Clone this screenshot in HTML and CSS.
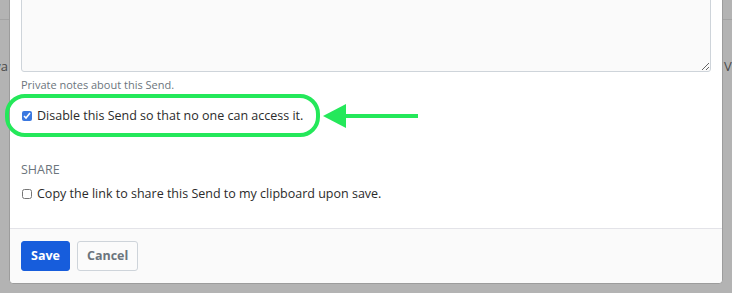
FILE: index.html
```html
<!DOCTYPE html>
<html lang="en">
<head>
<meta charset="utf-8">
<title>Edit Send</title>
<link rel="stylesheet" href="styles.css">
</head>
<body>
<div class="backdrop">
  <div class="edge edge-left">
    <div class="edge-rule"></div>
    <div class="edge-text">Java</div>
  </div>
  <div class="modal">
    <div class="modal-body">
      <textarea class="notes" aria-label="Notes"></textarea>
      <div class="help">Private notes about this Send.</div>
      <div class="callout">
        <label class="check-row">
          <input type="checkbox" class="check" checked>
          <span>Disable this Send so that no one can access it.</span>
        </label>
        <div class="ring"></div>
        <svg class="arrow" width="100" height="28" viewBox="0 0 100 28" aria-hidden="true">
          <polygon points="2,14 25,2 25,26" fill="#24e85a"/>
          <rect x="24" y="12" width="73" height="4" fill="#24e85a"/>
        </svg>
      </div>
      <div class="section-title">Share</div>
      <label class="check-row check-row-share">
        <input type="checkbox" class="check">
        <span>Copy the link to share this Send to my clipboard upon save.</span>
      </label>
    </div>
    <div class="modal-footer">
      <button class="btn btn-primary" type="button">Save</button>
      <button class="btn btn-outline" type="button">Cancel</button>
    </div>
  </div>
  <div class="edge edge-right">
    <div class="edge-rule"></div>
    <div class="edge-text">Vers</div>
  </div>
</div>
</body>
</html>
```

FILE: styles.css
```css
html, body {
  margin: 0;
  padding: 0;
  background: #b3b3b3;
  height: 293px;
  overflow: hidden;
}

body {
  font-family: "Open Sans", "Liberation Sans", sans-serif;
  color: #333333;
}

.backdrop {
  display: flex;
  align-items: flex-start;
  width: 732px;
}

.edge {
  width: 9px;
  flex: none;
  overflow: hidden;
}

.edge-rule {
  height: 19px;
  border-bottom: 1px solid #a3a3a3;
}

.edge-text {
  display: flex;
  margin-top: 37px;
  font-size: 13px;
  line-height: 18px;
  color: #4a4a4a;
  white-space: nowrap;
}

.edge-left .edge-text {
  justify-content: flex-end;
  padding-right: 1px;
}

.edge-right .edge-text {
  padding-left: 1px;
}

.modal {
  width: 714px;
  flex: none;
  box-sizing: border-box;
  margin-top: -40px;
  background: #ffffff;
  border: 1px solid #9c9c9c;
  border-radius: 4px;
}

.modal-body {
  padding: 0 11px 24px;
}

.notes {
  display: block;
  width: 100%;
  height: 111px;
  box-sizing: border-box;
  margin: 0;
  background: #fafafa;
  border: 1px solid #ced4da;
  border-radius: 3px;
  font-family: inherit;
}

.help {
  margin-top: 5px;
  font-size: 11px;
  line-height: 16px;
  color: #6c757d;
}

.callout {
  position: relative;
  margin-top: 13px;
}

.check-row {
  display: flex;
  align-items: center;
  gap: 5px;
  font-size: 12.5px;
  line-height: 20px;
  color: #2b2b2b;
}

.check {
  width: 10px;
  height: 10px;
  margin: 0 0 0 1px;
  accent-color: #3a78e0;
}

.ring {
  position: absolute;
  left: -16px;
  top: -12px;
  width: 315px;
  height: 43px;
  box-sizing: border-box;
  border: 4px solid #24e85a;
  border-radius: 20px;
}

.arrow {
  position: absolute;
  left: 300px;
  top: -4px;
}

.section-title {
  margin-top: 35px;
  font-size: 12.5px;
  line-height: 18px;
  text-transform: uppercase;
  color: #6c757d;
}

.check-row-share {
  margin-top: 5px;
}

.modal-footer {
  display: flex;
  gap: 7px;
  padding: 12px 11px;
  background: #fafafa;
  border-top: 1px solid #e3e3e8;
  border-radius: 0 0 4px 4px;
}

.btn {
  height: 30px;
  box-sizing: border-box;
  padding: 0 9px;
  border-radius: 3px;
  font-family: inherit;
  font-size: 12.5px;
  font-weight: 700;
  line-height: 28px;
  cursor: pointer;
}

.btn-primary {
  background: #175ddc;
  border: 1px solid #175ddc;
  color: #ffffff;
}

.btn-outline {
  background: #fbfbfb;
  border: 1px solid #ced4da;
  color: #6c757d;
}
```
